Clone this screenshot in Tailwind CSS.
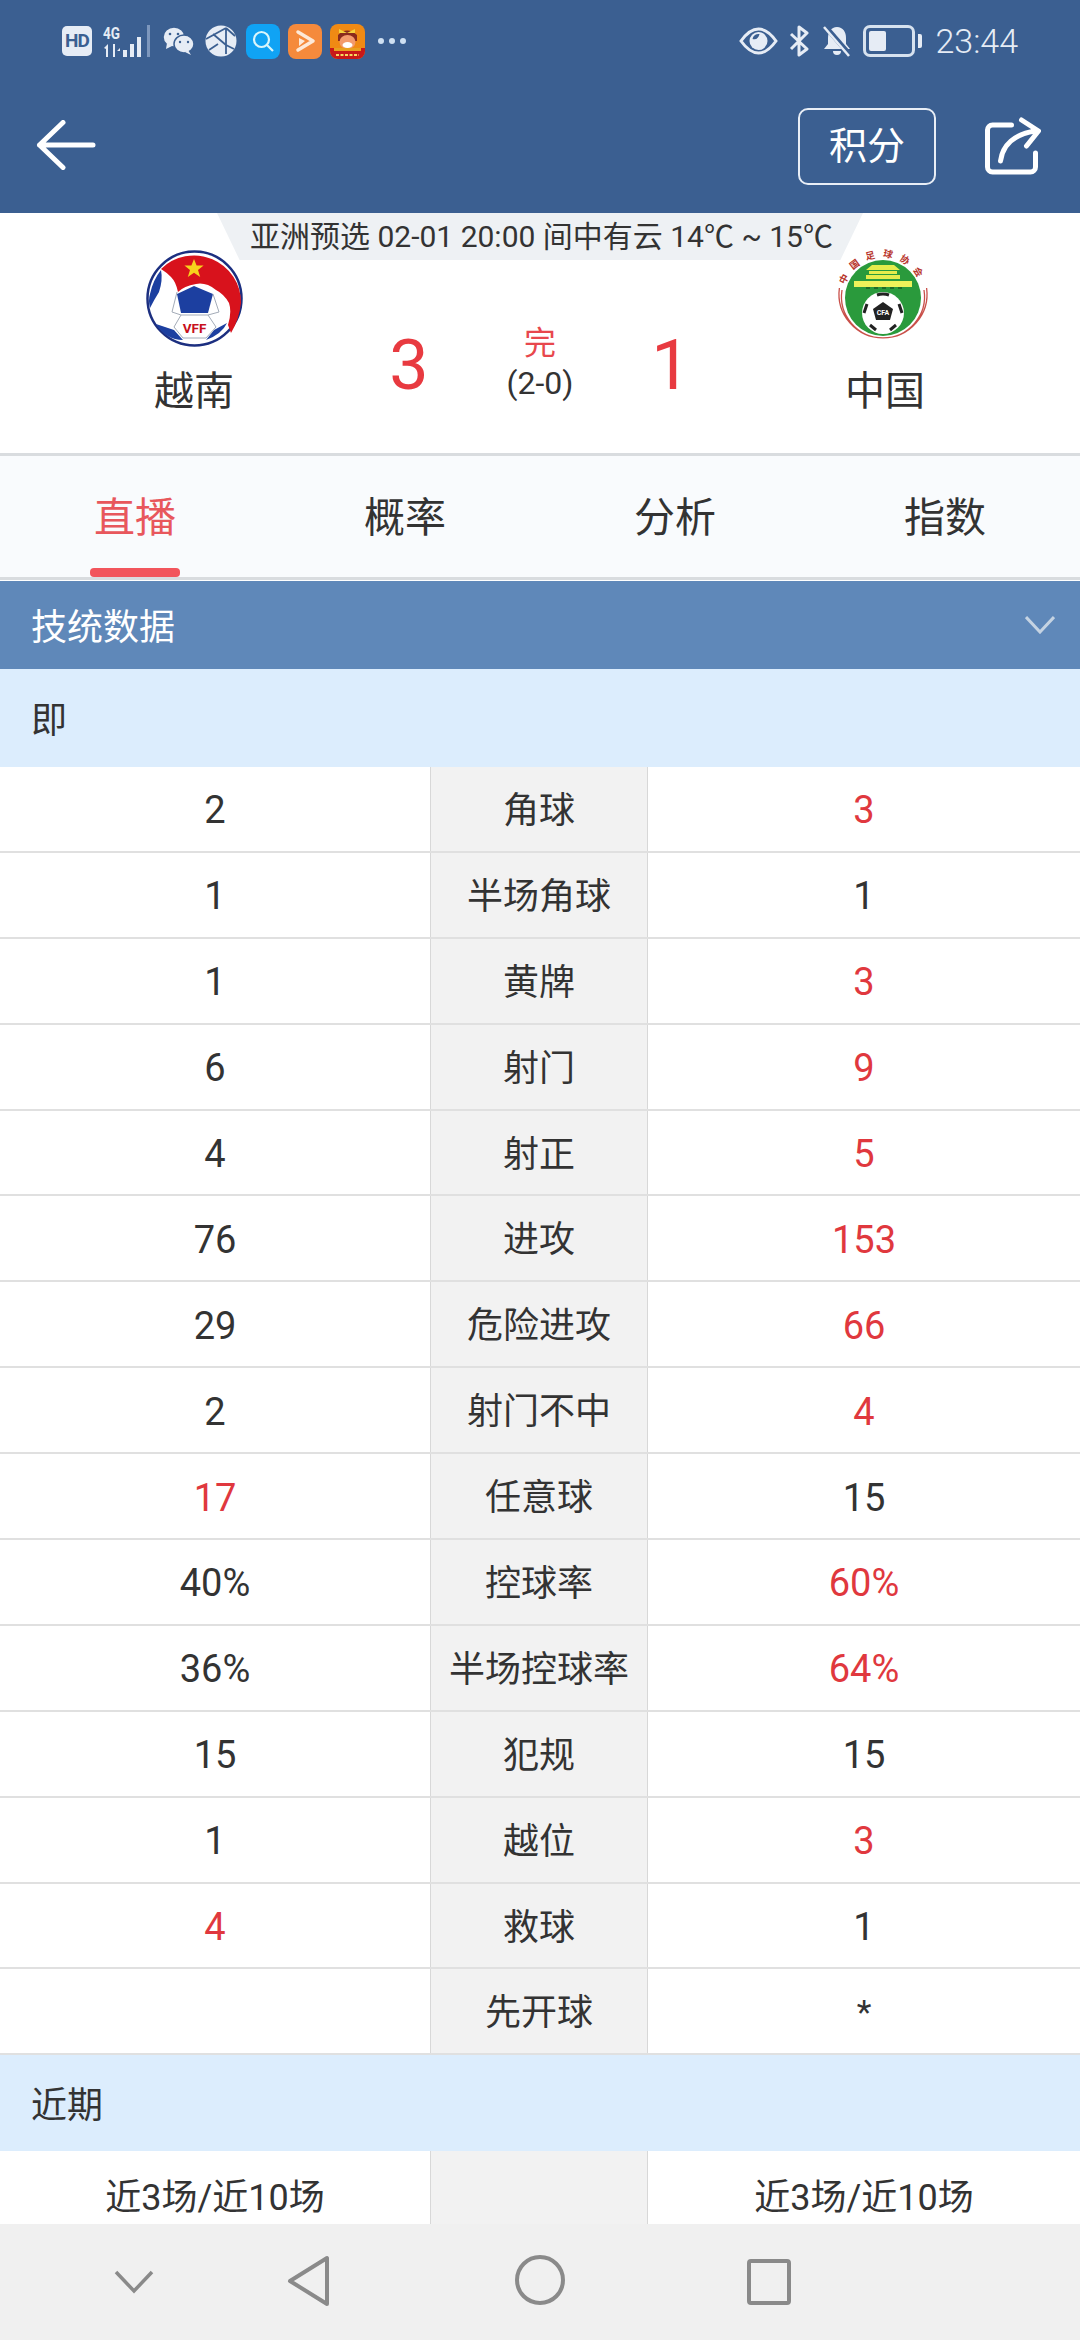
<!DOCTYPE html>
<html lang="zh-CN">
<head>
    <meta charset="UTF-8">
    <meta name="viewport" content="width=device-width, initial-scale=1.0">
    <title>越南 vs 中国</title>
    <script src="https://cdn.jsdelivr.net/npm/@tailwindcss/browser@4"></script>
</head>
<body class="font-['Roboto','Noto_Sans_CJK_SC',sans-serif] bg-white text-[#333]">
<div class="w-[1080px] h-[2340px] overflow-hidden flex flex-col">

    <!-- Header -->
    <header class="h-[213px] bg-[#3b5f91] text-white flex flex-col shrink-0">
        <!-- Status bar -->
        <div class="h-[84px] pl-[62px] pr-[62px] pt-[23px] flex justify-between items-start">
            <div class="flex items-center h-[36px]">
                <div class="w-[30px] h-[30px] rounded-[5px] bg-[#e6ecf5] text-[#3b5f91] text-[19px] font-bold flex items-center justify-center tracking-[-1px]">HD</div>
                <svg class="ml-[11px]" width="50" height="34" viewBox="0 0 50 34" fill="#e6ecf5">
                    <text x="0" y="15" font-size="17" font-weight="700" font-family="Roboto" textLength="17" lengthAdjust="spacingAndGlyphs">4G</text>
                    <path d="M1 24l4-4v13h-2v-8zM10 20h2v13h-2zM14 27h3v-3zM20 26h4v7h-4zM27 20h4v13h-4zM34 13h4v20h-4z"/>
                    <rect x="44" y="1" width="3" height="32" fill="#7d97bd"/>
                </svg>
                <svg class="ml-[10px]" width="31" height="30" viewBox="0 0 31 30" fill="#e6ecf5" stroke="#3b5f91" stroke-width="1.5">
                    <ellipse cx="11" cy="11" rx="11" ry="10"/>
                    <path d="M4 17l-1 6 6-3z" stroke="none"/>
                    <ellipse cx="21" cy="18" rx="10" ry="9"/>
                    <path d="M25 24l3 5-6-3z" stroke="none"/>
                    <circle cx="7" cy="8" r="1.3" fill="#3b5f91" stroke="none"/>
                    <circle cx="15" cy="8" r="1.3" fill="#3b5f91" stroke="none"/>
                    <circle cx="17" cy="16" r="1.2" fill="#3b5f91" stroke="none"/>
                    <circle cx="25" cy="16" r="1.2" fill="#3b5f91" stroke="none"/>
                </svg>
                <svg class="ml-[11px]" width="32" height="32" viewBox="0 0 32 32" fill="none">
                    <circle cx="16" cy="16" r="15.5" fill="#e6ecf5"/>
                    <path d="M1 14L21 3M4 25l9-6M8 9l13 11M21 3v26M21 3l9 8M21 20l8 4" stroke="#3b5f91" stroke-width="1.8"/>
                </svg>
                <div class="ml-[9px] w-[34px] h-[35px] rounded-[8px] bg-[#10a3f4] flex items-center justify-center">
                    <svg width="24" height="24" viewBox="0 0 24 24" fill="none" stroke="#d9f6fb" stroke-width="2.2"><circle cx="10.5" cy="10.5" r="7.5"/><path d="M16 16l6 6"/></svg>
                </div>
                <div class="ml-[8px] w-[34px] h-[35px] rounded-[8px] bg-[#f58a3c] flex items-center justify-center">
                    <svg width="22" height="24" viewBox="0 0 22 24" fill="none"><path d="M4 3l15 9-15 9" stroke="#fde9d8" stroke-width="3.500" stroke-linejoin="round" stroke-linecap="round"/><path d="M5 9l6 3-6 5z" fill="#fde9d8"/></svg>
                </div>
                <div class="ml-[8px] w-[35px] h-[35px] rounded-[8px] overflow-hidden">
                    <svg width="35" height="35" viewBox="0 0 35 35">
                        <rect width="35" height="35" fill="#f08a14"/>
                        <rect y="24" width="35" height="11" fill="#c81818"/>
                        <path d="M8 11q9-9 19 0v6H8z" fill="#8a2a1c"/>
                        <path d="M9 5l8 4 8-4v4H9z" fill="#f4d23c"/>
                        <ellipse cx="17.500" cy="18" rx="8" ry="7" fill="#f39a6c"/>
                        <ellipse cx="17.500" cy="21" rx="5" ry="3" fill="#fff"/>
                        <path d="M4 24h27v3H4z" fill="#e8a020"/>
                        <path d="M6 31h23" stroke="#f6d860" stroke-width="2" stroke-dasharray="3 1.500"/>
                    </svg>
                </div>
                <div class="ml-[13px] flex gap-[5px]">
                    <span class="w-[6px] h-[6px] rounded-full bg-[#cfe0f2]"></span>
                    <span class="w-[6px] h-[6px] rounded-full bg-[#cfe0f2]"></span>
                    <span class="w-[6px] h-[6px] rounded-full bg-[#cfe0f2]"></span>
                </div>
            </div>
            <div class="flex items-center h-[36px] text-[#e6ecf5]">
                <svg width="39" height="28" viewBox="0 0 38 28" fill="none">
                    <path d="M1.500 14Q10 2 19 2t17.500 12Q28 26 19 26T1.500 14z" stroke="#e6ecf5" stroke-width="3"/>
                    <circle cx="19" cy="14" r="9" fill="#e6ecf5"/>
                    <path d="M13 12a6 6 0 0 1 7-5c-1 4-3 6-7 5z" fill="#3b5f91"/>
                </svg>
                <svg class="ml-[11px]" width="20" height="32" viewBox="0 0 20 32" fill="none" stroke="#e6ecf5" stroke-width="3" stroke-linejoin="round">
                    <path d="M2 9l16 15-8 6V2l8 6L2 24"/>
                </svg>
                <svg class="ml-[13px]" width="30" height="32" viewBox="0 0 30 32" fill="#e6ecf5">
                    <path d="M15 2c6 0 9 5 9 11v6l4 5H2l4-5v-6C6 7 9 2 15 2z"/>
                    <path d="M11 26h8a4 4 0 0 1-8 0z"/>
                    <path d="M3 1l25 29" stroke="#3b5f91" stroke-width="5"/>
                    <path d="M2 2l25 29" stroke="#e6ecf5" stroke-width="2.500"/>
                </svg>
                <div class="ml-[11px] w-[52px] h-[32px] border-[3px] border-[#d7e2ef] rounded-[7px] p-[3px]">
                    <div class="w-[17px] h-full bg-[#e6ecf5] rounded-[2px]"></div>
                </div>
                <div class="ml-[3px] w-[4px] h-[14px] rounded-r-[2px] bg-[#e6ecf5]"></div>
                <span class="ml-[13px] text-[34px] font-light leading-none">23:44</span>
            </div>
        </div>
        <!-- Toolbar -->
        <div class="pl-[36px] pr-[39px] flex items-start">
            <svg class="mt-[36px]" width="60" height="50" viewBox="0 0 58 50" fill="none" stroke="#fff" stroke-width="5" stroke-linecap="round" stroke-linejoin="round">
                <path d="M26 2.500L2.500 25 26 47.500M2.500 25H56"/>
            </svg>
            <div class="ml-auto mt-[24px] w-[138px] h-[77px] border-2 border-[#e8eef6] rounded-[10px] flex items-center justify-center text-[38px]">积分</div>
            <svg class="ml-[48px] mt-[33px]" width="57" height="58" viewBox="0 0 56 58" fill="none" stroke="#fff" stroke-width="5" stroke-linecap="round" stroke-linejoin="round">
                <path d="M27 8H8a5 5 0 0 0-5 5v37a5 5 0 0 0 5 5h38a5 5 0 0 0 5-5V36"/>
                <path d="M16 44C18 28 30 17 51 14M37 3l17 11-12 15"/>
            </svg>
        </div>
    </header>

    <!-- Match info -->
    <section class="relative h-[240px] shrink-0 bg-white">
        <div class="absolute top-0 left-[217px] w-[646px] h-[47px] bg-[#eef1f4] [clip-path:polygon(0_0,100%_0,96.500%_100%,3.500%_100%)]"></div>
        <div class="absolute top-0 left-0 w-full h-[47px] pl-[3px] flex items-center justify-center text-[30px] leading-none whitespace-nowrap">亚洲预选 02-01 20:00 间中有云 14℃ ~ 15℃</div>
        <div class="flex pt-[37px] pl-[21px]">
            <div class="w-[346px] flex flex-col items-center">
                <svg class="ml-[2px]" width="98" height="98" viewBox="0 0 98 98">
                    <circle cx="48.500" cy="48.500" r="47" fill="#fff" stroke="#1c2f80" stroke-width="2.500"/>
                    <path d="M15 19A47 47 0 0 1 95 53Q93 70 85 83L82 75Q86 62 83 53 78 44 70 40 60 32 50 34 38 36 32 42 30 32 25 27 20 22 15 19z" fill="#d8121c"/>
                    <path d="M15 20Q7 30 4 44 2 50 4 58 8 50 13 42 17 30 15 20z" fill="#1c3fa0"/>
                    <path d="M48 36l19 8-5 19H35l-4-19z" fill="#1c3fa0"/>
                    <path d="M10 74l18 6 9 10Q20 90 10 74zM68 80l13-7Q76 84 60 90z" fill="#1c3fa0"/>
                    <path d="M28 77l7-12h27l8 12-10 11H37z" fill="#fff" stroke="#a4acb8" stroke-width="1"/>
                    <path d="M31 42l-5 20 9 3M67 44l6 18-11 3" fill="none" stroke="#a4acb8" stroke-width="1"/>
                    <path d="M48 9l2.600 6.500h7l-5.600 4.500 2.200 7-6.200-4.300-6.200 4.300 2.200-7-5.600-4.500h7z" fill="#f7d21c"/>
                    <text x="48.500" y="83" text-anchor="middle" font-size="13.500" font-weight="700" fill="#c8101c" font-family="Roboto">VFF</text>
                </svg>
                <div class="mt-[22px] text-[40px] leading-[44px]">越南</div>
            </div>
            <div class="w-[82px] mt-[85px] pl-[2px] text-center text-[70px] leading-[60px] text-[#e83a40]">3</div>
            <div class="w-[180px] mt-[74px] pl-[2px] flex flex-col items-center">
                <div class="text-[32px] leading-[38px] text-[#e8474d]">完</div>
                <div class="mt-[4px] text-[32px] leading-[34px]">(2-0)</div>
            </div>
            <div class="w-[78px] mt-[85px] pl-[6px] text-center text-[70px] leading-[60px] text-[#e83a40]">1</div>
            <div class="w-[352px] flex flex-col items-center">
                <svg class="overflow-visible" width="94" height="98" viewBox="0 0 94 98">
                    <defs><path id="cfaArc" d="M9 36A39.500 39.500 0 0 1 85 36"/></defs>
                    <path d="M3.400 36A44 44 0 1 0 90.600 36M6 38A41.500 41.500 0 1 0 88 38" transform="translate(0 2)" fill="none" stroke="#c9504a" stroke-width="1.300"/>
                    <text font-size="9.500" font-weight="700" fill="#b8352c" letter-spacing="7" font-family="'Noto Sans CJK SC'"><textPath href="#cfaArc" startOffset="1">中国足球协会</textPath></text>
                    <circle cx="47" cy="48" r="38" fill="#2a9a3c"/>
                    <path d="M36 15h22l6 5H30zM33 21h28v3H33zM30 25h34v4H30z" fill="#e6ec4c"/>
                    <rect x="18" y="31" width="58" height="6" fill="#eef25a"/>
                    <path d="M30 37h4v2h-4zM38 37h4v2h-4zM46 37h4v2h-4zM54 37h4v2h-4zM62 37h4v2h-4z" fill="#1e6a2a"/>
                    <circle cx="47" cy="63" r="21" fill="#fff"/>
                    <path d="M47 52l10 7-3 11H40l-3-11z" fill="#222"/>
                    <path d="M41 45q6-2 12 0M31 54l-3 9M63 54l3 9M34 75l6 5M60 75l-6 5" fill="none" stroke="#222" stroke-width="3"/>
                    <text x="47" y="65" text-anchor="middle" font-size="7" font-weight="700" fill="#fff" font-family="Roboto">CFA</text>
                </svg>
                <div class="mt-[22px] pl-[4px] text-[40px] leading-[44px]">中国</div>
            </div>
        </div>
    </section>

    <!-- Tabs -->
    <nav class="relative h-[127px] shrink-0 bg-[#f9fbfd] border-y-[3px] border-[#d9dcdf] grid grid-cols-4 text-[41px] leading-none text-center pt-[42px]">
        <div class="text-[#e8575c]">直播</div>
        <div>概率</div>
        <div>分析</div>
        <div>指数</div>
        <div class="absolute left-[90px] bottom-0 w-[90px] h-[9px] rounded-[4px] bg-[#f2555c]"></div>
    </nav>

    <!-- Stats -->
    <div class="h-[88px] shrink-0 mt-[1px] bg-[#5f88b9] flex items-center justify-between pl-[31px] pr-[25px] pt-[5px] text-white text-[36px]">
        <span>技统数据</span>
        <svg class="-mt-[5px]" width="30" height="18" viewBox="0 0 30 18" fill="none" stroke="#c5d3e2" stroke-width="3"><path d="M1 1l14 15L29 1"/></svg>
    </div>
    <div class="h-[98px] shrink-0 bg-[#dcedfd] flex items-center pl-[31px] pt-[5px] text-[36px]">即</div>

    <div class="text-[38px] text-center">
        <div class="grid grid-cols-[430px_218px_432px] h-[85.9px] border-b-2 border-[#e0e0e0]"><div class="self-center pt-[4px]">2</div><div class="bg-[#f2f2f2] border-x border-[#d8d8d8] flex items-center justify-center pt-[4px] text-[36px]">角球</div><div class="self-center pt-[4px] text-[#e0383e]">3</div></div>
        <div class="grid grid-cols-[430px_218px_432px] h-[85.9px] border-b-2 border-[#e0e0e0]"><div class="self-center pt-[4px]">1</div><div class="bg-[#f2f2f2] border-x border-[#d8d8d8] flex items-center justify-center pt-[4px] text-[36px]">半场角球</div><div class="self-center pt-[4px]">1</div></div>
        <div class="grid grid-cols-[430px_218px_432px] h-[85.9px] border-b-2 border-[#e0e0e0]"><div class="self-center pt-[4px]">1</div><div class="bg-[#f2f2f2] border-x border-[#d8d8d8] flex items-center justify-center pt-[4px] text-[36px]">黄牌</div><div class="self-center pt-[4px] text-[#e0383e]">3</div></div>
        <div class="grid grid-cols-[430px_218px_432px] h-[85.9px] border-b-2 border-[#e0e0e0]"><div class="self-center pt-[4px]">6</div><div class="bg-[#f2f2f2] border-x border-[#d8d8d8] flex items-center justify-center pt-[4px] text-[36px]">射门</div><div class="self-center pt-[4px] text-[#e0383e]">9</div></div>
        <div class="grid grid-cols-[430px_218px_432px] h-[85.9px] border-b-2 border-[#e0e0e0]"><div class="self-center pt-[4px]">4</div><div class="bg-[#f2f2f2] border-x border-[#d8d8d8] flex items-center justify-center pt-[4px] text-[36px]">射正</div><div class="self-center pt-[4px] text-[#e0383e]">5</div></div>
        <div class="grid grid-cols-[430px_218px_432px] h-[85.9px] border-b-2 border-[#e0e0e0]"><div class="self-center pt-[4px]">76</div><div class="bg-[#f2f2f2] border-x border-[#d8d8d8] flex items-center justify-center pt-[4px] text-[36px]">进攻</div><div class="self-center pt-[4px] text-[#e0383e]">153</div></div>
        <div class="grid grid-cols-[430px_218px_432px] h-[85.9px] border-b-2 border-[#e0e0e0]"><div class="self-center pt-[4px]">29</div><div class="bg-[#f2f2f2] border-x border-[#d8d8d8] flex items-center justify-center pt-[4px] text-[36px]">危险进攻</div><div class="self-center pt-[4px] text-[#e0383e]">66</div></div>
        <div class="grid grid-cols-[430px_218px_432px] h-[85.9px] border-b-2 border-[#e0e0e0]"><div class="self-center pt-[4px]">2</div><div class="bg-[#f2f2f2] border-x border-[#d8d8d8] flex items-center justify-center pt-[4px] text-[36px]">射门不中</div><div class="self-center pt-[4px] text-[#e0383e]">4</div></div>
        <div class="grid grid-cols-[430px_218px_432px] h-[85.9px] border-b-2 border-[#e0e0e0]"><div class="self-center pt-[4px] text-[#e0383e]">17</div><div class="bg-[#f2f2f2] border-x border-[#d8d8d8] flex items-center justify-center pt-[4px] text-[36px]">任意球</div><div class="self-center pt-[4px]">15</div></div>
        <div class="grid grid-cols-[430px_218px_432px] h-[85.9px] border-b-2 border-[#e0e0e0]"><div class="self-center pt-[4px]">40%</div><div class="bg-[#f2f2f2] border-x border-[#d8d8d8] flex items-center justify-center pt-[4px] text-[36px]">控球率</div><div class="self-center pt-[4px] text-[#e0383e]">60%</div></div>
        <div class="grid grid-cols-[430px_218px_432px] h-[85.9px] border-b-2 border-[#e0e0e0]"><div class="self-center pt-[4px]">36%</div><div class="bg-[#f2f2f2] border-x border-[#d8d8d8] flex items-center justify-center pt-[4px] text-[36px]">半场控球率</div><div class="self-center pt-[4px] text-[#e0383e]">64%</div></div>
        <div class="grid grid-cols-[430px_218px_432px] h-[85.9px] border-b-2 border-[#e0e0e0]"><div class="self-center pt-[4px]">15</div><div class="bg-[#f2f2f2] border-x border-[#d8d8d8] flex items-center justify-center pt-[4px] text-[36px]">犯规</div><div class="self-center pt-[4px]">15</div></div>
        <div class="grid grid-cols-[430px_218px_432px] h-[85.9px] border-b-2 border-[#e0e0e0]"><div class="self-center pt-[4px]">1</div><div class="bg-[#f2f2f2] border-x border-[#d8d8d8] flex items-center justify-center pt-[4px] text-[36px]">越位</div><div class="self-center pt-[4px] text-[#e0383e]">3</div></div>
        <div class="grid grid-cols-[430px_218px_432px] h-[85.9px] border-b-2 border-[#e0e0e0]"><div class="self-center pt-[4px] text-[#e0383e]">4</div><div class="bg-[#f2f2f2] border-x border-[#d8d8d8] flex items-center justify-center pt-[4px] text-[36px]">救球</div><div class="self-center pt-[4px]">1</div></div>
        <div class="grid grid-cols-[430px_218px_432px] h-[85.9px] border-b-2 border-[#e0e0e0]"><div></div><div class="bg-[#f2f2f2] border-x border-[#d8d8d8] flex items-center justify-center pt-[4px] text-[36px]">先开球</div><div class="self-center pt-[3px] text-[34px]">*</div></div>
    </div>
    <div class="h-[96px] shrink-0 bg-[#dcedfd] flex items-center pl-[31px] pt-[6px] text-[36px]">近期</div>
    <div class="flex-1 grid grid-cols-[430px_218px_432px] text-[36px] text-center min-h-0">
        <div class="pt-[20px]">近3场/近10场</div>
        <div class="bg-[#f2f2f2] border-x border-[#d8d8d8]"></div>
        <div class="pt-[20px]">近3场/近10场</div>
    </div>

    <!-- Android nav bar -->
    <div class="h-[116px] shrink-0 bg-[#f0f0f0] relative">
        <svg class="absolute left-[114px] top-[46px]" width="40" height="24" viewBox="0 0 40 24" fill="none" stroke="#8a8a8a" stroke-width="3.500"><path d="M2 2l18 19L38 2"/></svg>
        <svg class="absolute left-[287px] top-[31px]" width="44" height="52" viewBox="0 0 44 52" fill="none" stroke="#8a8a8a" stroke-width="4" stroke-linejoin="round"><path d="M40 3v46L3 26z"/></svg>
        <svg class="absolute left-[515px] top-[31px]" width="50" height="50" viewBox="0 0 50 50" fill="none" stroke="#8a8a8a" stroke-width="4"><circle cx="25" cy="25" r="23"/></svg>
        <svg class="absolute left-[747px] top-[35px]" width="44" height="46" viewBox="0 0 44 46" fill="none" stroke="#8a8a8a" stroke-width="4" stroke-linejoin="round"><rect x="2" y="2" width="40" height="42" rx="2"/></svg>
    </div>
</div>
</body>
</html>
